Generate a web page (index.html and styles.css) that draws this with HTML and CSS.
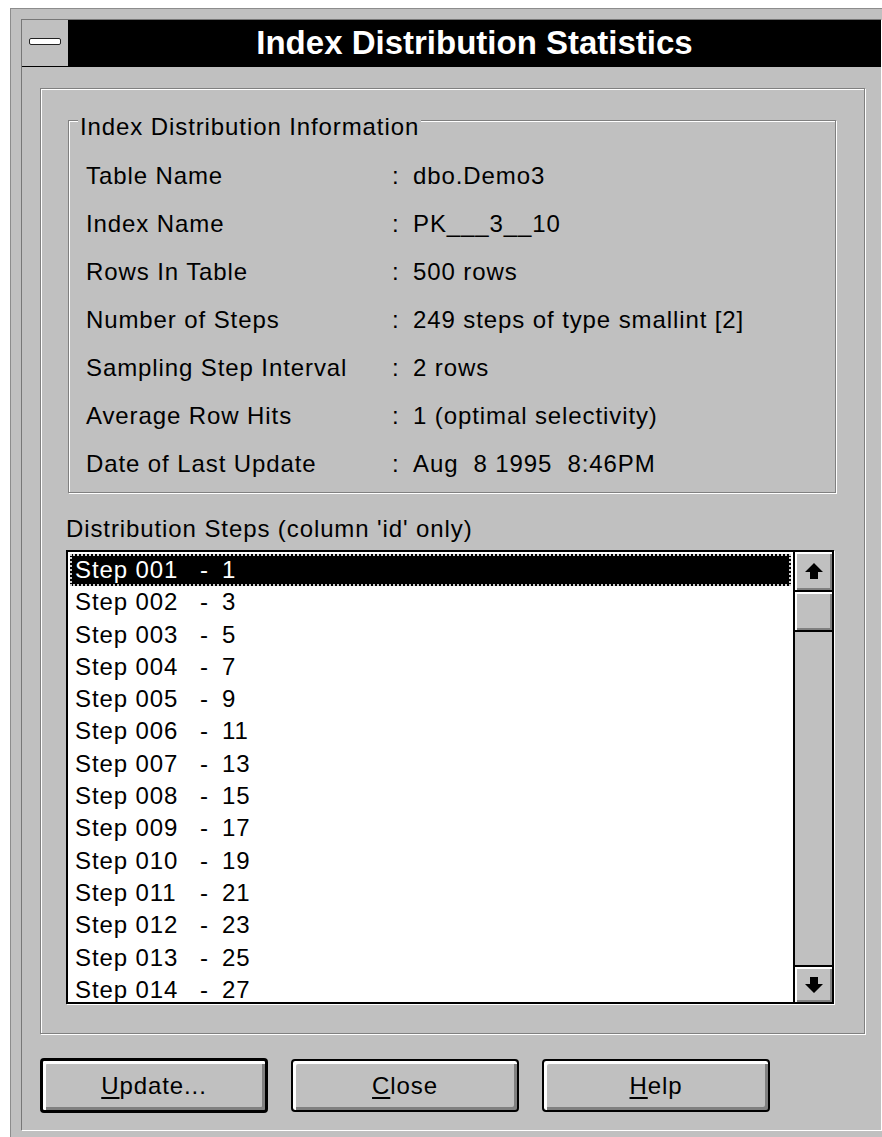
FILE: index.html
```html
<!DOCTYPE html>
<html lang="en">
<head>
<meta charset="utf-8">
<title>Index Distribution Statistics</title>
<link rel="stylesheet" href="styles.css">
</head>
<body>
<div class="window">
  <div class="frame">
    <div class="titlebar">
      <div class="sysmenu"><span class="sysbar"></span></div>
      <div class="title">Index Distribution Statistics</div>
    </div>
    <div class="client">
      <div class="panel">
        <fieldset class="group">
          <legend>Index Distribution Information</legend>
          <div class="info">
            <span class="info-key">Table Name</span><span class="info-sep">:</span><span class="info-val">dbo.Demo3</span>
            <span class="info-key">Index Name</span><span class="info-sep">:</span><span class="info-val">PK___3__10</span>
            <span class="info-key">Rows In Table</span><span class="info-sep">:</span><span class="info-val">500 rows</span>
            <span class="info-key">Number of Steps</span><span class="info-sep">:</span><span class="info-val">249 steps of type smallint [2]</span>
            <span class="info-key">Sampling Step Interval</span><span class="info-sep">:</span><span class="info-val">2 rows</span>
            <span class="info-key">Average Row Hits</span><span class="info-sep">:</span><span class="info-val">1 (optimal selectivity)</span>
            <span class="info-key">Date of Last Update</span><span class="info-sep">:</span><span class="info-val">Aug  8 1995  8:46PM</span>
          </div>
        </fieldset>

        <div class="list-label">Distribution Steps (column 'id' only)</div>
        <div class="listbox">
          <ul class="items">
            <li class="item selected"><span>Step 001</span><span>-</span><span>1</span></li>
            <li class="item"><span>Step 002</span><span>-</span><span>3</span></li>
            <li class="item"><span>Step 003</span><span>-</span><span>5</span></li>
            <li class="item"><span>Step 004</span><span>-</span><span>7</span></li>
            <li class="item"><span>Step 005</span><span>-</span><span>9</span></li>
            <li class="item"><span>Step 006</span><span>-</span><span>11</span></li>
            <li class="item"><span>Step 007</span><span>-</span><span>13</span></li>
            <li class="item"><span>Step 008</span><span>-</span><span>15</span></li>
            <li class="item"><span>Step 009</span><span>-</span><span>17</span></li>
            <li class="item"><span>Step 010</span><span>-</span><span>19</span></li>
            <li class="item"><span>Step 011</span><span>-</span><span>21</span></li>
            <li class="item"><span>Step 012</span><span>-</span><span>23</span></li>
            <li class="item"><span>Step 013</span><span>-</span><span>25</span></li>
            <li class="item"><span>Step 014</span><span>-</span><span>27</span></li>
          </ul>
          <div class="scrollbar">
            <div class="sb-btn sb-up">
              <svg width="20" height="18" viewBox="0 0 20 18"><polygon points="10,1 19,10 14,10 14,17 6,17 6,10 1,10" fill="#000"/></svg>
            </div>
            <div class="sb-thumb"></div>
            <div class="sb-track"></div>
            <div class="sb-btn sb-down">
              <svg width="20" height="18" viewBox="0 0 20 18"><polygon points="10,17 19,8 14,8 14,1 6,1 6,8 1,8" fill="#000"/></svg>
            </div>
          </div>
        </div>
      </div>

      <div class="buttons">
        <button class="btn btn-default" type="button"><u>U</u>pdate...</button>
        <button class="btn" type="button"><u>C</u>lose</button>
        <button class="btn" type="button"><u>H</u>elp</button>
      </div>
    </div>
  </div>
</div>
</body>
</html>
```
FILE: styles.css
```css
html, body {
  margin: 0;
  height: 100%;
  overflow: hidden;
  background: #fff;
}

body {
  font-family: "Liberation Sans", Arial, sans-serif;
  font-size: 24px;
  letter-spacing: 0.9px;
  color: #000;
}

/* outer window frame */
.window {
  margin: 8px 0 0 10px;
  width: 882px;
  height: 1140px;
  box-sizing: border-box;
  padding: 10px 10px 0 10px;
  background: #c0c0c0;
  border-left: 1px solid #8c8c8c;
  border-top: 1px solid #8c8c8c;
}

.frame {
  height: 1112px;
  box-sizing: border-box;
  border: 1px solid;
  border-color: #777 #fff #fff #777;
  display: flex;
  flex-direction: column;
}

/* caption */
.titlebar {
  display: flex;
  height: 46px;
  background: #000;
  border-bottom: 1px solid #000;
  flex: 0 0 auto;
}

.sysmenu {
  width: 46px;
  background: #c0c0c0;
  display: flex;
  align-items: center;
  justify-content: center;
}

.sysbar {
  width: 30px;
  height: 5px;
  background: #fff;
  border: 1.5px solid #222;
  border-radius: 2px;
  margin-top: -3px;
}

.title {
  flex: 1;
  color: #fff;
  font-weight: bold;
  font-size: 33px;
  letter-spacing: 0;
  display: flex;
  align-items: center;
  justify-content: center;
}

/* dialog client area */
.client {
  padding: 21px 16px 0 18px;
}

.panel {
  height: 946px;
  box-sizing: border-box;
  border: 1px solid #808080;
  box-shadow: inset 1px 1px 0 #fff, 1px 1px 0 #fff;
  padding: 12px 30px 0 25px;
}

.group {
  margin: 0 -2px 0 2px;
  padding: 12px 0 4px 0;
  border: 1px solid #808080;
  box-shadow: inset 1px 1px 0 #fff, 1px 1px 0 #fff;
  min-width: 0;
}

.group legend {
  margin-left: 9px;
  padding: 12px 2px 0;
  line-height: 27px;
  background: #c0c0c0;
}

.info {
  display: grid;
  grid-template-columns: 306px 21px auto;
  grid-auto-rows: 48px;
  align-items: center;
  margin-left: 17px;
}

.info-val {
  white-space: pre;
}

.list-label {
  margin-top: 22px;
  line-height: 27px;
}

/* list box with vertical scroll bar */
.listbox {
  margin-top: 8px;
  height: 454px;
  box-sizing: border-box;
  border: 2px solid #000;
  box-shadow: 1px 1px 0 #fff;
  background: #fff;
  display: flex;
}

.items {
  flex: 1;
  list-style: none;
  margin: 0;
  padding: 2px;
  overflow: hidden;
}

.item {
  display: grid;
  grid-template-columns: 125px 22px auto;
  height: 32.3px;
  line-height: 32px;
  padding-left: 5px;
}

.item.selected {
  background: #000;
  color: #fff;
  outline: 2px dotted #cfcfcf;
  outline-offset: -2px;
}

.scrollbar {
  flex: 0 0 39px;
  box-sizing: border-box;
  border-left: 2px solid #000;
  display: flex;
  flex-direction: column;
  background: #c0c0c0;
}

.sb-btn,
.sb-thumb {
  background: #c0c0c0;
  box-shadow: inset 2px 2px 0 #fff, inset -2px -2px 0 #808080;
  display: flex;
  align-items: center;
  justify-content: center;
}

.sb-up,
.sb-thumb {
  height: 38px;
  border-bottom: 2px solid #000;
}

.sb-track {
  flex: 1;
}

.sb-down {
  height: 35px;
  border-top: 2px solid #000;
}

/* push buttons */
.buttons {
  display: flex;
  align-items: center;
  gap: 23px;
  margin-top: 24px;
}

.btn {
  width: 228px;
  height: 53px;
  box-sizing: border-box;
  border: 2px solid #000;
  border-radius: 4px;
  background: #c0c0c0;
  box-shadow: inset 3px 3px 0 #fff, inset -3px -3px 0 #808080;
  font: inherit;
  letter-spacing: inherit;
  color: #000;
  padding: 0;
  display: flex;
  align-items: center;
  justify-content: center;
}

.btn-default {
  height: 55px;
  border-width: 3px;
}

.btn u {
  text-underline-offset: 3px;
  text-decoration-thickness: 2px;
}
```
